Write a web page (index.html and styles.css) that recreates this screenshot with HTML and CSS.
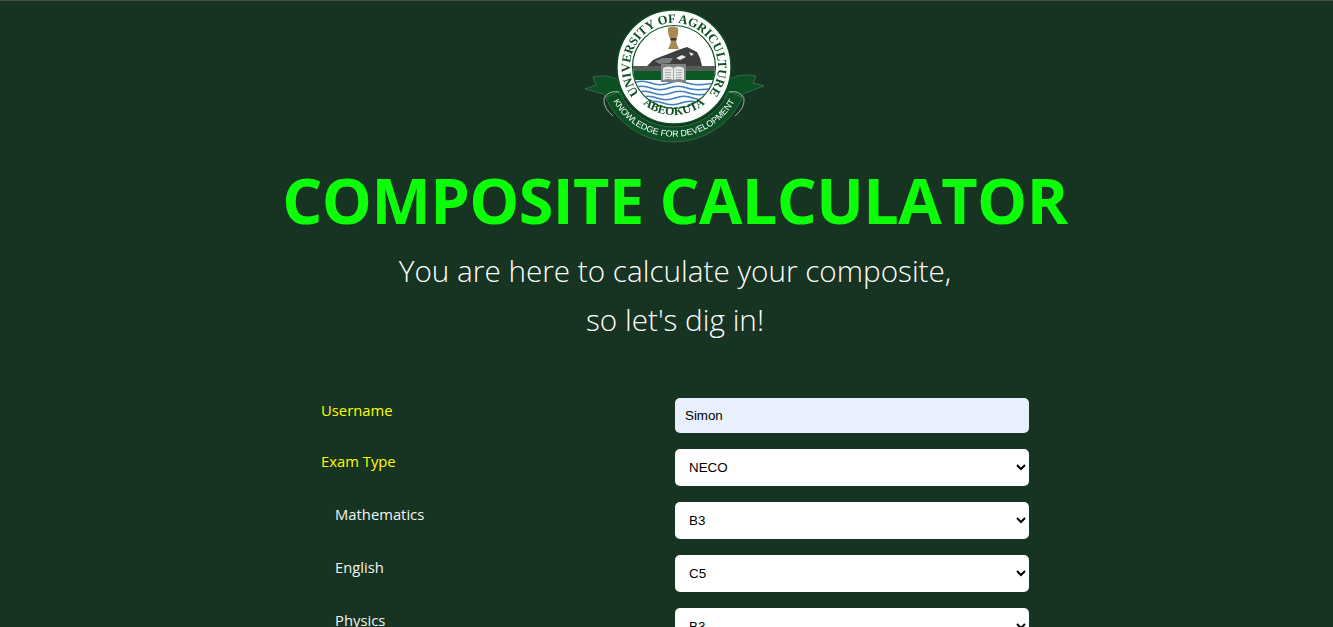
FILE: index.html
```html
<!DOCTYPE html>
<html lang="en">
<head>
<meta charset="utf-8">
<title>Composite Calculator</title>
<link rel="stylesheet" href="styles.css">
</head>
<body>
<div class="page">
  <header class="hero">
    <svg class="logo" viewBox="0 0 180 136" width="180" height="136" role="img" aria-label="University of Agriculture Abeokuta crest">
      <defs>
        <path id="arcTop" d="M 67 97 A 44 44 0 1 1 111 97"/>
        <path id="arcBottom" d="M 55 93 A 48 48 0 0 0 123 93"/>
        <path id="arcRibbon" d="M 26 89 A 69.8 69.8 0 0 0 152 89"/>
        <clipPath id="inner"><circle cx="89" cy="59" r="41"/></clipPath>
      </defs>
      <path class="tail" d="M0 81 L11 77 L8 69 Q22 66 32 71 Q42 76 46 84 L30 96 L18 86 Z"/>
      <path class="tail" d="M179 78 L168 75 L171 68 Q157 65 147 70 Q137 75 132 84 L148 96 L160 85 Z"/>
      <circle class="ring" cx="89" cy="59" r="57"/>
      <circle class="inner" cx="89" cy="59" r="41.5"/>
      <g clip-path="url(#inner)">
        <path class="rock" d="M62 58 L68 52 L75 49 L83 46 L93 42 L102 39 L112 44 L115 50 L117 58 Z"/>
        <path class="rock-mid" d="M70 53 L78 50 L88 50 L85 55 L74 56 Z"/>
        <path class="rock-light" d="M91 50 L97 47 L101 49 L95 52 Z M104 44 L109 46 L106 48 Z"/>
        <rect class="bar-grey" x="45" y="58" width="88" height="5"/>
        <rect class="bar-green" x="45" y="63" width="88" height="9"/>
        <path class="wave" d="M48 75 Q57 71.500 66 75 T84 75 T102 75 T130 75"/>
        <path class="wave" d="M48 80 Q57 76.500 66 80 T84 80 T102 80 T130 80"/>
        <path class="wave" d="M50 85 Q59 81.500 68 85 T86 85 T104 85 T128 85"/>
        <path class="wave" d="M54 90 Q63 86.500 72 90 T90 90 T108 90 T124 90"/>
        <path class="wave" d="M60 95 Q69 91.500 78 95 T96 95 T118 95"/>
      </g>
      <path class="book" d="M76 56 H101 V74 H76 Z"/>
      <path class="book-page" d="M78 60 Q84 57 88.500 60 Q93 57 99 60 V72 Q93 70 88.500 72 Q84 70 78 72 Z"/>
      <path class="book-line" d="M88.500 60 V72 M80 62 H86 M80 64.500 H86 M80 67 H86 M80 69.500 H86 M91 62 H97 M91 64.500 H97 M91 67 H97 M91 69.500 H97"/>
      <path class="sheaf" d="M83 41 Q86 36 86 32 Q82 26 83 20 Q88 17 93 20 Q94 26 91 32 Q91 36 94 41 Z"/>
      <rect class="sheaf-band" x="85.500" y="30" width="6" height="2.500"/>
      <path class="band" d="M20.500 89.500 A75 75 0 0 0 157.500 89.500 L143.800 83.400 A60 60 0 0 1 34.200 83.400 Z"/>
      <path class="curl" d="M34 84 Q24 82 19 90 Q18 100 28 108 M144 84 Q154 82 159 90 Q160 100 150 108"/>
      <text class="crest-top"><textPath href="#arcTop" startOffset="50%" text-anchor="middle">UNIVERSITY OF AGRICULTURE</textPath></text>
      <text class="crest-bottom"><textPath href="#arcBottom" startOffset="50%" text-anchor="middle">ABEOKUTA</textPath></text>
      <text class="crest-ribbon"><textPath href="#arcRibbon" startOffset="50%" text-anchor="middle">KNOWLEDGE FOR DEVELOPMENT</textPath></text>
    </svg>
    <h1 class="title">COMPOSITE CALCULATOR</h1>
    <p class="lead">You are here to calculate your composite,<br>so let's dig in!</p>
  </header>
  <form class="form">
    <label class="label label-main" for="username">Username</label>
    <input class="field-input" id="username" type="text" value="Simon">
    <label class="label label-main" for="exam">Exam Type</label>
    <select class="field-select" id="exam"><option>NECO</option></select>
    <label class="label label-sub" for="maths">Mathematics</label>
    <select class="field-select" id="maths"><option>B3</option></select>
    <label class="label label-sub" for="english">English</label>
    <select class="field-select" id="english"><option>C5</option></select>
    <label class="label label-sub" for="physics">Physics</label>
    <select class="field-select" id="physics"><option>B3</option></select>
  </form>
</div>
</body>
</html>
```
FILE: styles.css
```css
* { box-sizing: border-box; }
html, body { margin: 0; padding: 0; }
body {
  background: #173321;
  color: #fff;
  font-family: "Open Sans", "Noto Sans", sans-serif;
}
.page {
  height: 100vh;
  overflow: hidden;
  border-top: 1px solid #4a4a4a;
  padding-left: 17px;
}
.hero {
  display: flex;
  flex-direction: column;
  align-items: center;
  padding-top: 7px;
}
.logo { display: block; filter: blur(0.3px); }
.title {
  margin: 16px 0 0;
  font-size: 63px;
  line-height: 80px;
  font-weight: 700;
  letter-spacing: -0.6px;
  color: #0cff08;
  white-space: nowrap;
}
.lead {
  margin: 6px 0 0;
  font-size: 29.7px;
  line-height: 49px;
  font-weight: 300;
  text-align: center;
}
.form {
  width: 708px;
  margin: 54px auto 0;
  display: grid;
  grid-template-columns: 354px 354px;
  row-gap: 16px;
  align-items: start;
}
.label { font-size: 14.8px; line-height: 24px; }
.label-main { color: #ffff00; }
.label-sub { color: #f2f6f2; padding-left: 14px; }
.field-input {
  height: 35px;
  border: 0;
  border-radius: 5px;
  padding: 0 10px;
  background: #e8f0fe;
  color: #000;
  font: 13.33px "Liberation Sans", Arial, sans-serif;
}
.field-select {
  height: 37px;
  border: 0;
  border-radius: 5px;
  padding: 0 10px;
  background: #fff;
  color: #000;
  font: 13.33px "Liberation Sans", Arial, sans-serif;
}
.tail { fill: #0c4f22; stroke: #5f8f6d; stroke-width: 0.5; }
.band { fill: #0c4f22; stroke: #5f8f6d; stroke-width: 0.5; }
.curl { fill: none; stroke: #d7e6da; stroke-width: 0.7; }
.ring { fill: #fff; stroke: #0c4f22; stroke-width: 1.4; }
.inner { fill: #fff; stroke: #0c4f22; stroke-width: 1.2; }
.rock { fill: #3c3f3e; }
.rock-mid { fill: #7b7f7d; }
.rock-light { fill: #eceeed; }
.bar-grey { fill: #565a58; }
.bar-green { fill: #0b5a26; }
.wave { fill: none; stroke: #3d7fc0; stroke-width: 1.6; }
.book { fill: #7f8381; }
.book-page { fill: #e6e8e7; }
.book-line { fill: none; stroke: #8b8f8d; stroke-width: 0.7; }
.sheaf { fill: #a98a54; }
.sheaf-band { fill: #3a3a2c; }
.crest-top { font: 700 12.6px "Liberation Serif", serif; fill: #0c4f22; }
.crest-bottom { font: 700 12px "Liberation Serif", serif; fill: #0c4f22; }
.crest-ribbon { font: 8.800px "Liberation Sans", sans-serif; fill: #fff; }
```
